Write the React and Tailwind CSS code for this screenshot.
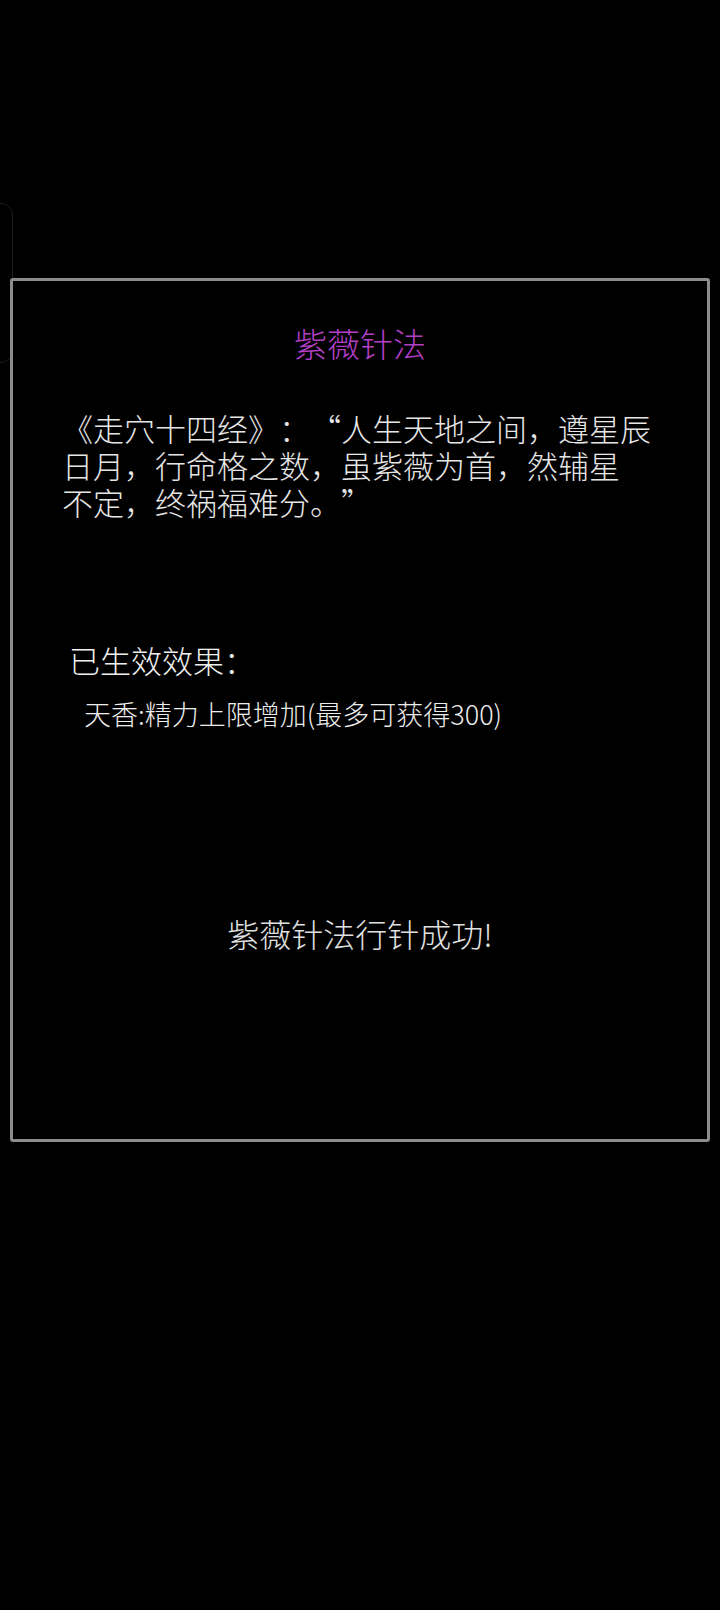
export default function App() {
  const font = { fontFamily: '"Noto Sans CJK SC", "Noto Sans", sans-serif' };
  return (
    <div className="relative w-[720px] h-[1610px] bg-black overflow-hidden [text-spacing-trim:space-all]" style={font} lang="zh-CN">
      <div className="absolute left-[-40px] top-[203px] w-[53px] h-[160px] rounded-[12px] border border-[#1c1c1c]" />
      <div className="relative ml-[10px] mr-[10px] pt-[278px]">
        <div className="h-[864px] border-[3px] border-[#8c8c8c] rounded-[3px] bg-black flex flex-col font-light">
          <div className="mt-[42px] text-center text-[33px] leading-[40px] text-[#b23fc6]">紫薇针法</div>
          <div className="mt-[46px] pl-[49px] w-[660px] text-[31px] leading-[37px] text-[#e6e6e6] whitespace-nowrap">
            《走穴十四经》：“人生天地之间，遵星辰<br />
            日月，行命格之数，虽紫薇为首，然辅星<br />
            不定，终祸福难分。”
          </div>
          <div className="mt-[120px] pl-[56px] text-[31px] leading-[40px] text-[#f0f0f0]">已生效效果：</div>
          <div className="mt-[17px] pl-[71px] text-[27px] leading-[34px] text-[#ededed]">天香:精力上限增加(最多可获得300)</div>
          <div className="mt-[182px] text-center text-[32px] leading-[40px] text-[#e0e0e0]">紫薇针法行针成功!</div>
        </div>
      </div>
    </div>
  );
}
